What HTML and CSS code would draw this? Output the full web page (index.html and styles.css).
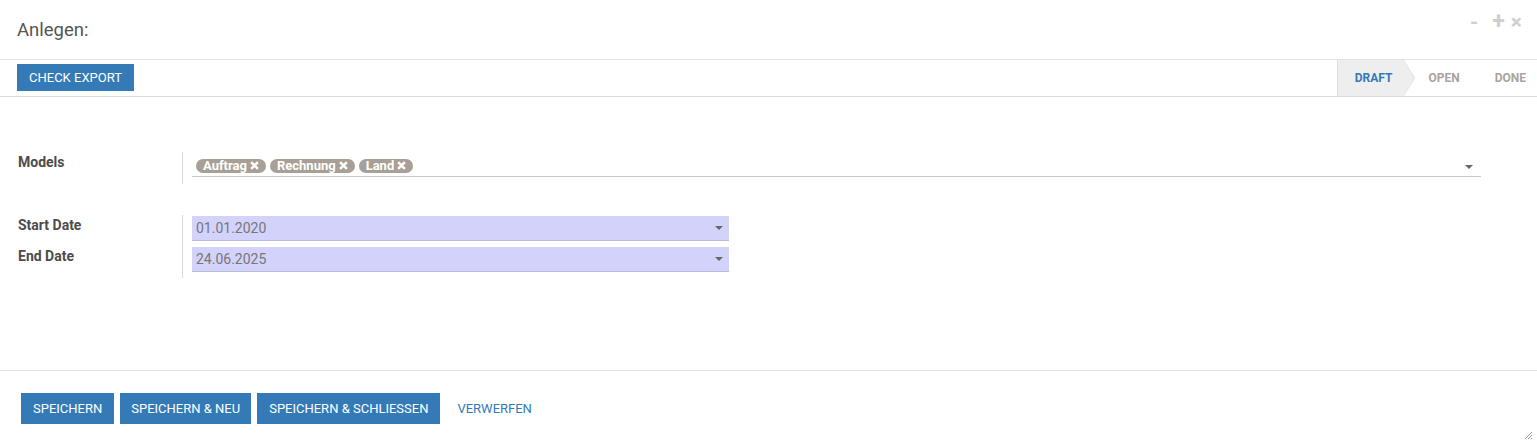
FILE: index.html
```html
<!DOCTYPE html>
<html lang="de">
<head>
<meta charset="utf-8">
<title>Anlegen</title>
<link rel="stylesheet" href="styles.css">
</head>
<body>
<div class="dialog">
  <header class="header">
    <h4 class="title">Anlegen:</h4>
    <div class="win-controls">
      <span class="wc wc-min">-</span>
      <span class="wc wc-max">+</span>
      <span class="wc wc-close">&times;</span>
    </div>
  </header>

  <div class="statusbar">
    <button class="btn btn-primary btn-check">CHECK EXPORT</button>
    <div class="steps">
      <span class="step step-active">DRAFT</span>
      <span class="step">OPEN</span>
      <span class="step step-last">DONE</span>
    </div>
  </div>

  <div class="form">
    <div class="group group-models">
      <div class="labels">
        <div class="lbl">Models</div>
      </div>
      <div class="fields">
        <div class="many2many">
          <span class="tag">Auftrag<svg class="tag-x" viewBox="0 0 8 8"><path d="M1 1L7 7M7 1L1 7"/></svg></span>
          <span class="tag">Rechnung<svg class="tag-x" viewBox="0 0 8 8"><path d="M1 1L7 7M7 1L1 7"/></svg></span>
          <span class="tag">Land<svg class="tag-x" viewBox="0 0 8 8"><path d="M1 1L7 7M7 1L1 7"/></svg></span>
          <span class="caret"></span>
        </div>
      </div>
    </div>

    <div class="group group-dates">
      <div class="labels">
        <div class="lbl lbl-row">Start Date</div>
        <div class="lbl lbl-row">End Date</div>
      </div>
      <div class="fields">
        <div class="date-input"><span>01.01.2020</span><span class="caret"></span></div>
        <div class="date-input"><span>24.06.2025</span><span class="caret"></span></div>
      </div>
    </div>
  </div>

  <footer class="footer">
    <button class="btn btn-primary">SPEICHERN</button>
    <button class="btn btn-primary btn-neu">SPEICHERN &amp; NEU</button>
    <button class="btn btn-primary">SPEICHERN &amp; SCHLIESSEN</button>
    <button class="btn btn-link">VERWERFEN</button>
  </footer>

  <svg class="resize" viewBox="0 0 10 10" width="10" height="10">
    <path d="M9 2L2 9M9 5L5 9M9 8L8 9"/>
  </svg>
</div>
</body>
</html>
```

FILE: styles.css
```css
html, body {
  margin: 0;
  padding: 0;
  background: #fff;
}

body {
  font-family: Roboto, "Liberation Sans", Arial, sans-serif;
  font-size: 14px;
  color: #4c4c4c;
}

.dialog {
  position: relative;
  width: 1537px;
  height: 445px;
  overflow: hidden;
}

/* header */
.header {
  height: 59px;
  border-bottom: 1px solid #e2e2e2;
  display: flex;
  align-items: center;
  padding: 0 15px 0 17px;
}

.title {
  margin: 0;
  font-size: 18.5px;
  font-weight: 400;
  line-height: 20px;
  color: #555;
}

.win-controls {
  margin-left: auto;
  align-self: flex-start;
  margin-top: 9px;
  display: flex;
  align-items: baseline;
  gap: 6px;
  color: #cfcfcf;
  font-weight: 700;
  font-size: 21px;
  line-height: 26px;
}

.wc-min { margin-right: 8px; }
.wc-max { font-size: 23px; }

/* status bar */
.statusbar {
  height: 36px;
  border-bottom: 1px solid #dcdcdc;
  display: flex;
  padding-left: 17px;
}

.btn {
  font-family: Roboto, "Liberation Sans", Arial, sans-serif;
  font-size: 13px;
  border: none;
  margin: 0;
  cursor: pointer;
  padding: 0 12px;
  line-height: 16px;
}

.btn-primary {
  background: #337ab7;
  color: #fff;
}

.btn-check {
  margin-top: 4px;
  height: 27px;
  width: 117px;
  padding: 0;
}

.steps {
  margin-left: auto;
  display: flex;
  height: 36px;
  border-left: 1px solid #e0e0e0;
}

.step {
  position: relative;
  display: flex;
  align-items: center;
  padding: 0 11px 0 24px;
  font-size: 12px;
  font-weight: 700;
  color: #aaa49d;
  background: #fff;
}

.step-active {
  background: #eeeeee;
  color: #337ab7;
  padding-left: 17px;
  padding-right: 12px;
  z-index: 2;
}

.step::before,
.step::after {
  content: "";
  position: absolute;
  top: 0;
  width: 0;
  height: 0;
  border-top: 18px solid transparent;
  border-bottom: 18px solid transparent;
}

.step::before {
  right: -11px;
  border-left: 11px solid #dcdcdc;
  z-index: 1;
}

.step::after {
  right: -10px;
  border-left: 10px solid #fff;
  z-index: 2;
}

.step-active::after {
  border-left-color: #eeeeee;
}

.step-last::before,
.step-last::after {
  display: none;
}

.step + .step { z-index: 1; }
.step-last { z-index: 0; }

/* form */
.form {
  height: 273px;
  box-sizing: border-box;
  padding-top: 55px;
}

.group {
  display: flex;
}

.labels {
  width: 164px;
  padding-left: 18px;
  flex: none;
}

.lbl {
  font-weight: 700;
  font-size: 14px;
  line-height: 20px;
  color: #4c4c4c;
}

.fields {
  border-left: 1px solid #dadada;
  padding-left: 9px;
}

.group-models .fields {
  height: 32px;
  flex: 1;
  padding-right: 56px;
}

.many2many {
  margin-top: 3px;
  height: 21px;
  border-bottom: 1px solid #c8c8c8;
  display: flex;
  align-items: center;
  gap: 4px;
  padding-left: 4px;
  position: relative;
}

.tag {
  display: inline-flex;
  align-items: center;
  height: 14px;
  border-radius: 7px;
  background: #a8a096;
  color: #fff;
  font-size: 13px;
  font-weight: 700;
  line-height: 14px;
  padding: 0 7px 0 7px;
  gap: 3px;
}

.tag-x {
  width: 9px;
  height: 9px;
  fill: none;
  stroke: #fff;
  stroke-width: 2.3;
}

.caret {
  width: 0;
  height: 0;
  border-left: 4px solid transparent;
  border-right: 4px solid transparent;
  border-top: 4px solid #666;
}

.many2many .caret {
  position: absolute;
  right: 8px;
  top: 10px;
}

.group-dates {
  margin-top: 31px;
}

.group-dates .fields {
  height: 63px;
  padding-top: 1px;
  box-sizing: border-box;
}

.lbl-row {
  height: 30px;
  padding-top: 1px;
}

.lbl-row:first-child {
  padding-top: 0;
}

.date-input {
  width: 537px;
  height: 25px;
  box-sizing: border-box;
  background: #d2d2fb;
  border-bottom: 1px solid #bcbcd6;
  display: flex;
  align-items: center;
  justify-content: space-between;
  padding: 0 6px 0 4px;
  color: #777;
  font-size: 14px;
  margin-bottom: 6px;
}

/* footer */
.footer {
  border-top: 1px solid #e2e2e2;
  padding: 22px 0 0 21px;
  display: flex;
  gap: 6px;
}

.footer .btn {
  height: 31px;
}

.footer .btn-neu {
  padding: 0 11px;
}

.btn-link {
  background: transparent;
  color: #337ab7;
  padding: 0 11px;
}

.resize {
  position: absolute;
  right: 4px;
  bottom: 5px;
  fill: none;
  stroke: #999;
  stroke-width: 1;
}
```
